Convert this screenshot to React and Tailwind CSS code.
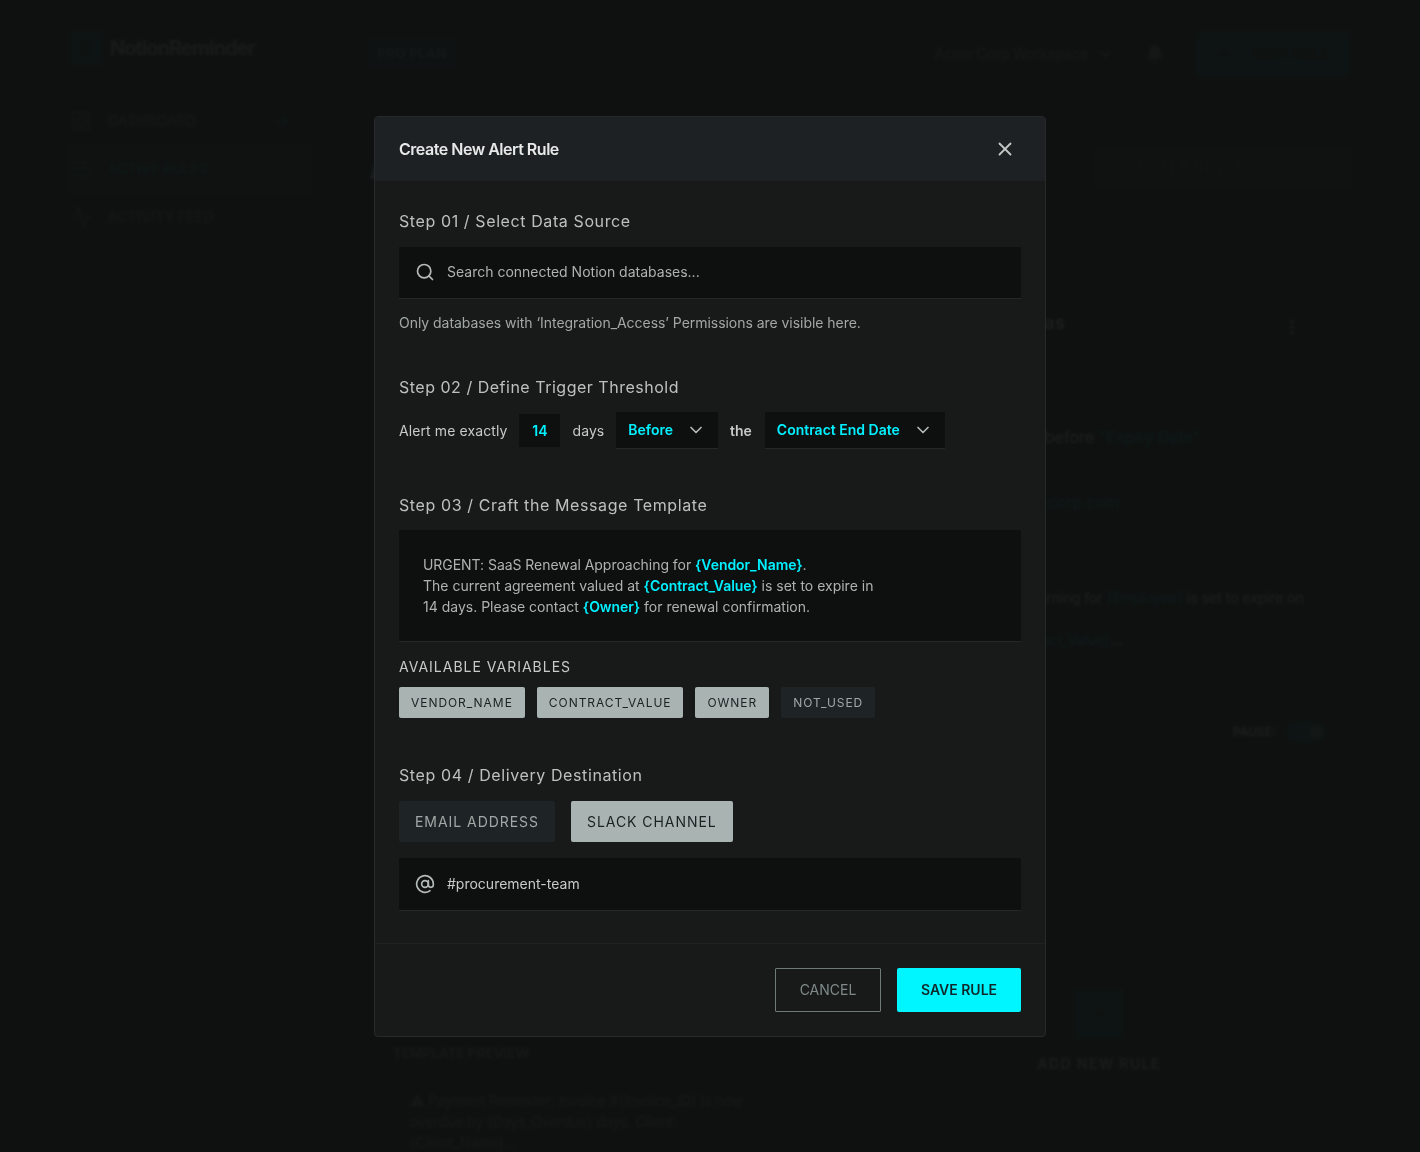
import { Search, AtSign, X, ChevronDown, LayoutDashboard, SlidersHorizontal, Activity, ArrowRight, Bell, Plus, MoreVertical } from "lucide-react";

const cyan = "text-[#00f0ff] font-semibold tracking-[-0.05px]";

function SideItem({ icon: Icon, label, active, arrow }) {
  return (
    <div className={`flex h-12 items-center gap-4 pr-5 ${active ? "bg-[#1e2325]/60 text-[#00f0ff]/40" : "text-[#a9b1af]/50"}`}>
      <Icon size={22} strokeWidth={1.5} />
      <span className="flex-1 text-sm font-semibold">{label}</span>
      {arrow && <ArrowRight size={16} className="text-[#00f0ff]/50" />}
    </div>
  );
}

function Label({ children, className = "" }) {
  return <div className={`text-xs font-semibold tracking-[0.1em] text-[#a9b1af] ${className}`}>{children}</div>;
}

function Background() {
  return (
    <div className="flex h-[1152px] overflow-hidden bg-[#0f1211] pl-[70px] pr-[70px] pt-8 text-[#e2e5e4]">
      <aside className="w-[299px] shrink-0">
        <div className="flex items-center gap-2">
          <div className="flex h-8 w-8 items-center justify-center bg-[#00f0e0]/20 text-[#0f1211]">
            <AtSign size={14} />
          </div>
          <span className="text-xl font-bold tracking-[-0.05em] opacity-70">NotionReminder</span>
        </div>
        <nav className="mt-[33px] w-[240px]">
          <SideItem icon={LayoutDashboard} label="DASHBOARD" arrow />
          <SideItem icon={SlidersHorizontal} label="ACTIVE RULES" active />
          <SideItem icon={Activity} label="ACTIVITY FEED" />
        </nav>
      </aside>
      <main className="flex-1">
        <div className="flex h-11 items-center justify-between">
          <span className="flex h-7 w-[86px] items-center justify-center bg-[#0050ff]/15 text-[13px] font-bold tracking-[0.04em] text-[#a9b1af]/60">PRO PLAN</span>
          <div className="flex items-center">
            <span className="text-sm text-[#e2e5e4]/50">Acme Corp Workspace</span>
            <ChevronDown size={16} className="ml-[9px] opacity-60" />
            <Bell size={18} fill="currentColor" className="ml-[33px] opacity-50" />
            <div className="ml-8 flex h-11 w-[154px] items-center justify-center gap-5 rounded-sm bg-[#00f0e0]/20 text-sm font-bold tracking-[0.05em] text-[#0f1211]">
              <Plus size={16} />
              NEW RULE
            </div>
          </div>
        </div>
        <div className="mt-[72px] flex h-10 items-center justify-between">
          <h1 className="text-3xl font-bold">Active Rules</h1>
          <div className="flex h-10 w-[255px] items-center gap-[15px] bg-[#1e2325]/40 px-3 text-sm tracking-[0.1em] text-[#a9b1af]/30">
            <Search size={14} />
            FILTER RULES...
          </div>
        </div>
        <div className="mt-[121px] grid grid-cols-[459px_1fr] gap-5">
          <div />
          <div className="h-[470px] whitespace-nowrap px-6">
            <div className="flex items-center justify-between pr-[25px]">
              <span className="text-lg font-semibold leading-7 tracking-[0.02em]">Work Permits &amp; Visas</span>
              <MoreVertical size={18} className="mt-2" />
            </div>
            <Label className="mt-[66px] leading-4">TRIGGER CONDITION</Label>
            <div className="mt-[6px] text-base leading-6">Send a notice 30 days before <span className="text-[#00f0ff]/60">"Expiry Date"</span></div>
            <Label className="mt-[21px] leading-4">DESTINATION</Label>
            <div className="mt-1 text-base leading-6 text-[#00f0ff]/60">hr-visa-alert-us@acmecorp.com</div>
            <Label className="mt-[45px] leading-4">TEMPLATE PREVIEW</Label>
            <div className="mt-[12px] text-sm leading-[21px]">
              Attention: Visa Permits Warning for <span className="text-[#00f0ff]/60">{"{Employee}"}</span> is set to expire on
              <br />
              {"{Expiry_Date}."}
              <br />
              Estimated value is: <span className="text-[#00f0ff]/60">{"{Contract_Value}"}</span>...
            </div>
            <div className="mt-[72px] flex items-center justify-end gap-[10px]">
              <span className="text-xs font-semibold">PAUSE:</span>
              <span className="flex h-5 w-10 items-center justify-end rounded-full bg-[#00f0e0]/25 px-1">
                <span className="h-3 w-3 rounded-full bg-[#a9b1af]/60" />
              </span>
            </div>
          </div>
        </div>
        <div className="grid grid-cols-[459px_1fr] gap-5">
          <div className="whitespace-nowrap pl-6 pt-[264px] opacity-70">
            <div className="text-[13.5px] font-semibold leading-5 text-[#a9b1af]">TEMPLATE PREVIEW</div>
            <div className="ml-[17px] mt-[27px] text-sm leading-[21px] tracking-[-0.1px] text-[#a9b1af]">
              ⚠ Payment Reminder: Invoice #{"{Invoice_ID}"} is now
              <br />
              overdue by {"{Days_Overdue}"} days. Client:
              <br />
              {"{Client_Name}"}...
            </div>
          </div>
          <div className="flex flex-col items-center">
            <div className="mt-[211px] flex h-12 w-12 items-center justify-center bg-[#00f0e0]/20 text-[#0f1211]">
              <Plus size={16} />
            </div>
            <div className="mt-4 text-sm font-bold tracking-[0.1em] text-[#a9b1af]">ADD NEW RULE</div>
          </div>
        </div>
      </main>
    </div>
  );
}

function StepTitle({ children, className = "" }) {
  return <h3 className={`text-base leading-6 tracking-[0.6px] text-[#bcc0bf] ${className}`}>{children}</h3>;
}

function Dropdown({ children, className = "" }) {
  return (
    <div className={`flex h-[37px] items-center gap-[13px] border-b border-[#252828] bg-[#0e1010] pl-3 pr-3 text-sm font-semibold text-[#00f0ff] ${className}`}>
      <span>{children}</span>
      <ChevronDown size={20} strokeWidth={2} className="text-[#b4bab8]" />
    </div>
  );
}

function Chip({ children, on }) {
  return (
    <span className={`flex h-[31px] items-center rounded-[2px] px-3 text-xs tracking-[0.95px] ${on ? "bg-[#a9b4b2] text-[#1c2122]" : "bg-[#1e2325] text-[#a2a8a6]"}`}>
      {children}
    </span>
  );
}

function Modal() {
  return (
    <div className="absolute inset-0 bg-[#0f1211]/95 backdrop-blur-[1px]">
      <div className="absolute left-[374px] top-[116px] w-[672px] overflow-hidden rounded-[4px] border border-[#262a2a] bg-[#181a1a]">
        <div className="flex h-[64px] items-center justify-between bg-[#1d2123] pl-6 pr-[29px]">
          <h2 className="text-base font-semibold tracking-[-0.03em] text-[#e6e9e8]">Create New Alert Rule</h2>
          <X size={22} strokeWidth={2} className="text-[#c3c8c6]" />
        </div>
        <div className="px-6 pt-[28px]">
          <StepTitle>Step 01 / Select Data Source</StepTitle>
          <div className="mt-[14px] flex h-[52px] items-center gap-3 border-b border-[#252828] bg-[#0e1010] px-4 pb-[2px] text-sm text-[#aeb2b1]">
            <Search size={20} strokeWidth={2} className="text-[#b4bab8]" />
            Search connected Notion databases...
          </div>
          <p className="mt-[14px] text-sm leading-5 tracking-[-0.04px] text-[#a2a8a6]">
            Only databases with ‘Integration_Access’ Permissions are visible here.
          </p>

          <StepTitle className="mt-[42px]"><span className="tracking-[0.51px]">Step 02 / Define Trigger Threshold</span></StepTitle>
          <div className="mt-[13px] flex items-center gap-3 text-sm text-[#c6cac8]">
            <span className="tracking-[0.1px]">Alert me exactly</span>
            <span className="flex h-[33px] w-[41px] items-center justify-center bg-[#0e1010] font-semibold text-[#00f0ff]">14</span>
            <span className="tracking-[0.1px]">days</span>
            <Dropdown>Before</Dropdown>
            <span className="font-semibold">the</span>
            <Dropdown className="ml-px">Contract End Date</Dropdown>
          </div>

          <StepTitle className="mt-[44px]">Step 03 / Craft the Message Template</StepTitle>
          <div className="mt-[13px] h-[112px] border-b border-[#252828] bg-[#0e1010] px-6 pt-[24px] text-sm leading-[21px] text-[#aeb2b0]">
            <span className="tracking-[-0.05px]">URGENT: SaaS Renewal Approaching for </span><span className={cyan}>{"{Vendor_Name}"}</span>.
            <br />
            The current agreement valued at <span className={cyan}>{"{Contract_Value}"}</span> is set to expire in
            <br />
            14 days. Please contact <span className={cyan}>{"{Owner}"}</span> for renewal confirmation.
          </div>
          <div className="mt-[15px] text-sm leading-5 tracking-[1px] text-[#c6cac8]">AVAILABLE VARIABLES</div>
          <div className="mt-[10px] flex gap-3">
            <Chip on>VENDOR_NAME</Chip>
            <Chip on>CONTRACT_VALUE</Chip>
            <Chip on>OWNER</Chip>
            <Chip>NOT_USED</Chip>
          </div>

          <StepTitle className="mt-[45px]">Step 04 / Delivery Destination</StepTitle>
          <div className="mt-[14px] flex gap-4 text-sm tracking-[0.95px]">
            <span className="flex h-[41px] items-center rounded-[2px] bg-[#1e2325] px-4 text-[#a2a8a6]">EMAIL ADDRESS</span>
            <span className="flex h-[41px] items-center rounded-[2px] bg-[#a9b4b2] px-4 text-[#1c2122]">SLACK CHANNEL</span>
          </div>
          <div className="mt-4 flex h-[53px] items-center gap-3 border-b border-[#252828] bg-[#0e1010] px-4 text-sm text-[#c6cac8]">
            <AtSign size={20} strokeWidth={2} className="text-[#b4bab8]" />
            #procurement-team
          </div>
        </div>
        <div className="mt-8 flex justify-end gap-4 border-t border-[#1f2222] px-6 pb-6 pt-6 text-sm">
          <button className="h-11 w-[106px] rounded-[1px] border border-[#6f7a78] text-[#7f8a88]">CANCEL</button>
          <button className="h-11 w-[124px] rounded-[2px] bg-[#00f6ff] font-semibold text-[#10282a]">SAVE RULE</button>
        </div>
      </div>
    </div>
  );
}

export default function App() {
  return (
    <div className="relative h-[1152px] overflow-hidden font-['Inter',sans-serif]">
      <Background />
      <Modal />
    </div>
  );
}
